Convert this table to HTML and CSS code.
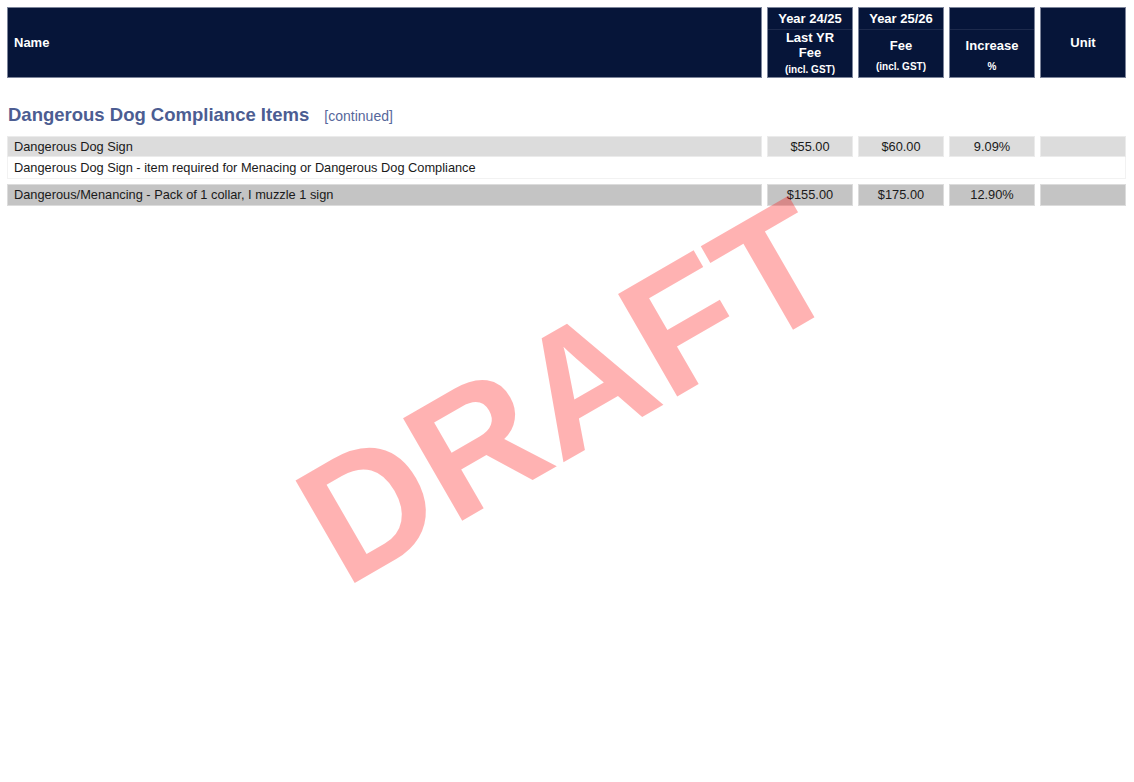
FILE: index.html
```html
<!DOCTYPE html>
<html>
<head>
<meta charset="utf-8">
<link rel="stylesheet" href="styles.css">
</head>
<body>
<div class="page">
  <div class="head-row">
    <div class="hcell hname"><span>Name</span></div>
    <div class="hcell hsplit">
      <div class="htop">Year 24/25</div>
      <div class="hbot"><div class="hmain two">Last YR<br>Fee</div><div class="hsub">(incl. GST)</div></div>
    </div>
    <div class="hcell hsplit">
      <div class="htop">Year 25/26</div>
      <div class="hbot"><div class="hmain">Fee</div><div class="hsub">(incl. GST)</div></div>
    </div>
    <div class="hcell hsplit">
      <div class="htop"></div>
      <div class="hbot"><div class="hmain">Increase</div><div class="hsub">%</div></div>
    </div>
    <div class="hcell hunit"><span>Unit</span></div>
  </div>

  <h2 class="section-title">Dangerous Dog Compliance Items <span class="cont">[continued]</span></h2>

  <div class="item">
    <div class="row light">
      <div class="cell name">Dangerous Dog Sign</div>
      <div class="cell num">$55.00</div>
      <div class="cell num">$60.00</div>
      <div class="cell num">9.09%</div>
      <div class="cell num"></div>
    </div>
    <div class="desc">Dangerous Dog Sign - item required for Menacing or Dangerous Dog Compliance</div>
  </div>

  <div class="item">
    <div class="row dark">
      <div class="cell name">Dangerous/Menancing - Pack of 1 collar, I muzzle 1 sign</div>
      <div class="cell num">$155.00</div>
      <div class="cell num">$175.00</div>
      <div class="cell num">12.90%</div>
      <div class="cell num"></div>
    </div>
  </div>
</div>
<div class="watermark">DRAFT</div>
</body>
</html>
```

FILE: styles.css
```css
html, body {
  margin: 0;
  padding: 0;
  background: #ffffff;
}
body {
  font-family: "Liberation Sans", Arial, sans-serif;
  color: #1a1a1a;
  width: 1134px;
  height: 782px;
  overflow: hidden;
  position: relative;
}
.page {
  padding: 7px 8px 0 7px;
}
.head-row,
.row {
  display: grid;
  grid-template-columns: 755px 86px 86px 86px 86px;
  column-gap: 5px;
}
.hcell {
  background: #061539;
  color: #ffffff;
  font-weight: bold;
  height: 71px;
  box-sizing: border-box;
  border: 1px solid #7c849a;
}
.hname {
  display: flex;
  align-items: center;
  padding: 0 0 0 6px;
  font-size: 13px;
}
.hunit {
  display: flex;
  align-items: center;
  justify-content: center;
  padding-bottom: 1px;
  font-size: 13px;
}
.hsplit {
  display: flex;
  flex-direction: column;
  text-align: center;
}
.htop {
  height: 21px;
  line-height: 21px;
  font-size: 13px;
  border-bottom: 1px solid #1d2a4c;
}
.hbot {
  flex: 1;
  display: flex;
  flex-direction: column;
}
.hmain {
  flex: 1;
  display: flex;
  align-items: center;
  justify-content: center;
  font-size: 13px;
  line-height: 15px;
}
.hmain.two {
  padding-bottom: 3px;
}
.hsub {
  font-size: 10px;
  line-height: 14px;
  padding-bottom: 3px;
}
.section-title {
  margin: 26px 0 0 1px;
  height: 32px;
  font-size: 18.5px;
  font-weight: bold;
  color: #4c5d92;
  line-height: 22px;
}
.cont {
  font-size: 14px;
  font-weight: normal;
  margin-left: 10px;
  color: #56679b;
}
.item {
  margin-bottom: 5px;
}
.cell {
  box-sizing: border-box;
  height: 21px;
  line-height: 19px;
  font-size: 12.8px;
  border: 1px solid #ebebeb;
}
.light .cell {
  background: #dcdcdc;
}
.dark .cell {
  background: #c4c4c4;
  border-color: #dcdcdc;
  height: 22px;
  line-height: 20px;
}
.cell.name {
  padding-left: 6px;
}
.cell.num {
  text-align: center;
}
.desc {
  box-sizing: border-box;
  height: 22px;
  line-height: 21px;
  font-size: 12.8px;
  padding-left: 6px;
  border: 1px solid #f2f2f2;
  border-top: none;
}
.watermark {
  position: absolute;
  left: 567px;
  top: 391px;
  transform: translate(-50%, -50%) rotate(-30deg);
  font-family: "Liberation Sans", Arial, sans-serif;
  font-weight: bold;
  font-size: 172px;
  line-height: 1;
  color: rgba(255, 0, 0, 0.3);
  white-space: nowrap;
  pointer-events: none;
}
```
